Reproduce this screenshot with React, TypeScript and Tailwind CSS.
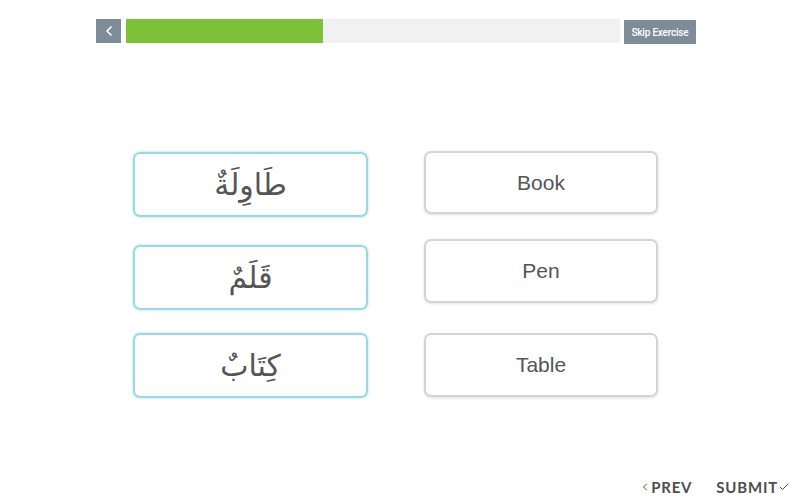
import { ChevronLeft, Check } from 'lucide-react'

const arabic = ['طَاوِلَةٌ', 'قَلَمٌ', 'كِتَابٌ']

export default function App() {
  return (
    <div className="w-[800px] h-[502px] bg-white relative overflow-hidden" style={{ fontFamily: '"Liberation Sans", Arial, sans-serif' }}>
      {/* header */}
      <div className="flex items-start pt-[19px] pl-[96px] w-[700px]">
        <button className="w-[25px] h-[24px] bg-[#7e8b98] flex items-center justify-center">
          <ChevronLeft className="w-[16px] h-[16px] text-white" strokeWidth={2.5} />
        </button>
        <div className="ml-[5px] w-[494px] h-[24px] bg-[#f1f1f1]">
          <div className="h-full w-[197px] bg-[#7dc13b]" />
        </div>
        <button className="ml-[4px] mt-[1px] w-[72px] h-[24px] bg-[#7e8b98] text-white text-[10px] tracking-[-0.2px] font-['Roboto'] font-medium">
          Skip Exercise
        </button>
      </div>

      {/* cards */}
      <div className="flex pl-[133px] pt-[107px] gap-[56px]">
        <div className="flex flex-col w-[235px]">
          {arabic.map((w, i) => (
            <div
              key={w}
              className={`${i === 0 ? 'mt-[1px]' : i === 1 ? 'mt-[28px]' : 'mt-[23px]'} h-[65px] rounded-[7px] border-2 border-[#9ad8e4] shadow-[0_0_3px_rgba(120,200,220,0.6)] flex items-center justify-center text-[#555] text-[30px]`}
              style={{ fontFamily: '"DejaVu Sans", "Noto Sans", serif' }}
              dir="rtl"
            >
              {w}
            </div>
          ))}
        </div>
        <div className="flex flex-col w-[234px]">
          {['Book', 'Pen', 'Table'].map((w, i) => (
            <div
              key={w}
              className={`${i === 0 ? 'mt-0 h-[63px]' : i === 1 ? 'mt-[25px] h-[64px]' : 'mt-[30px] h-[64px]'} rounded-[7px] border-2 border-[#d4d4d4] shadow-[0_1px_3px_rgba(0,0,0,0.12)] flex items-center justify-center text-[#555] text-[21px]`}
            >
              {w}
            </div>
          ))}
        </div>
      </div>

      {/* footer */}
      <div className="absolute right-[10px] bottom-[4px] flex items-center gap-[24px] text-[#4d4d4d] text-[15px] font-bold tracking-[0.8px]" style={{ fontFamily: 'Lato, sans-serif' }}>
        <span className="flex items-center">
          <ChevronLeft className="w-[12px] h-[12px]" strokeWidth={2} />PREV
        </span>
        <span className="flex items-center">
          SUBMIT<Check className="w-[12px] h-[12px]" strokeWidth={2} />
        </span>
      </div>
    </div>
  )
}
